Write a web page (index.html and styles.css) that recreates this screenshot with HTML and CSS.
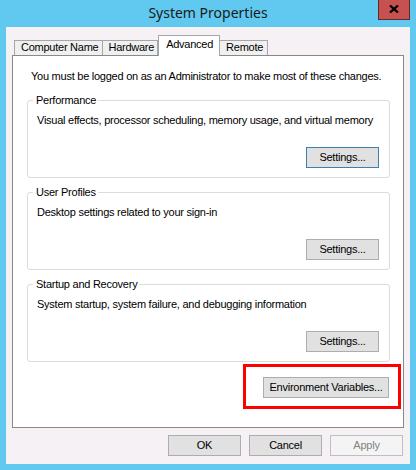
FILE: index.html
```html
<!DOCTYPE html>
<html>
<head>
<meta charset="utf-8">
<link rel="stylesheet" href="styles.css">
</head>
<body>
<div class="frame">
  <div class="titlebar">
    <span></span>
    <span class="title">System Properties</span>
    <span class="close-wrap">
      <span class="close"><svg width="10" height="8" viewBox="0 0 10 8"><path d="M1 0.5 L9 7.5 M9 0.5 L1 7.5" stroke="#000" stroke-width="2.3" fill="none"/></svg></span>
    </span>
  </div>
  <div class="window">
    <div class="tabs">
      <div class="tab">Computer Name</div>
      <div class="tab hw">Hardware</div>
      <div class="tab active">Advanced</div>
      <div class="tab">Remote</div>
    </div>
    <div class="panel">
      <p class="intro">You must be logged on as an Administrator to make most of these changes.</p>
      <fieldset class="group">
        <legend>Performance</legend>
        <p class="desc">Visual effects, processor scheduling, memory usage, and virtual memory</p>
        <div class="row"><button class="btn focus">Settings...</button></div>
      </fieldset>
      <fieldset class="group">
        <legend>User Profiles</legend>
        <p class="desc">Desktop settings related to your sign-in</p>
        <div class="row"><button class="btn">Settings...</button></div>
      </fieldset>
      <fieldset class="group last">
        <legend>Startup and Recovery</legend>
        <p class="desc">System startup, system failure, and debugging information</p>
        <div class="row"><button class="btn">Settings...</button></div>
      </fieldset>
      <div class="env-row">
        <div class="highlight"><button class="btn env">Environment Variables...</button></div>
      </div>
    </div>
    <div class="actions">
      <button class="btn act">OK</button>
      <button class="btn act">Cancel</button>
      <button class="btn act disabled">Apply</button>
    </div>
  </div>
</div>
</body>
</html>
```
FILE: styles.css
```css
* { box-sizing: border-box; }
html, body { margin: 0; padding: 0; }
body {
  background: #61c9ef;
  font-family: "Liberation Sans", Arial, sans-serif;
  font-size: 11px;
  letter-spacing: -0.25px;
  color: #000;
}
.frame {
  width: 416px;
  height: 470px;
  display: flex;
  flex-direction: column;
}
.titlebar {
  height: 27px;
  display: grid;
  grid-template-columns: 1fr auto 1fr;
  align-items: start;
}
.title {
  font-family: "Noto Sans", "Open Sans", sans-serif;
  font-size: 14px;
  letter-spacing: 0;
  line-height: 26px;
  color: #1a1a1a;
}
.close-wrap { display: flex; justify-content: flex-end; padding-right: 6px; }
.close {
  width: 32px;
  height: 20px;
  background: #c75050;
  border: 1px solid #5e2a2a;
  border-top: none;
  display: flex;
  align-items: center;
  justify-content: center;
  padding-bottom: 2px;
}
.window {
  margin: 0 6px;
  height: 437px;
  background: #f5f1f5;
  display: flex;
  flex-direction: column;
}
.tabs {
  display: flex;
  align-items: flex-end;
  padding: 8px 0 0 8px;
  height: 28px;
  position: relative;
  z-index: 1;
}
.tab {
  height: 15px;
  border: 1px solid #a6a6a6;
  border-bottom: none;
  padding: 0 4px 0 6px;
  line-height: 13px;
  background: #f0f0f0;
  white-space: nowrap;
}
.tab.hw { padding: 0 3px 0 5px; }
.tab + .tab { border-left: none; }
.tab.active {
  height: 21px;
  background: #fff;
  border-left: 1px solid #a6a6a6;
  padding: 0 6px 0 7px;
  line-height: 16px;
  margin-bottom: -1px;
  position: relative;
}
.tab.active + .tab { border-left: none; }
.panel {
  margin: 0 6px;
  height: 373px;
  background: #fff;
  border: 1px solid #898989;
  padding: 14px 13px 0 14px;
}
.intro {
  margin: 0 0 11px 4px;
  line-height: 13px;
  height: 13px;
  white-space: nowrap;
}
.group {
  margin: 0 0 8px 0;
  border: 1px solid #dcdcdc;
  border-radius: 3px;
  padding: 0 10px 9px 9px;
  height: 84px;
}
.group.last { margin-top: 1px; }
.group legend {
  margin-left: -4px;
  padding: 0 2px 0 3px;
  line-height: 13px;
}
.desc {
  margin: 7px 0 0 0;
  line-height: 13px;
  height: 13px;
  white-space: nowrap;
}
.row {
  display: flex;
  justify-content: flex-end;
  margin-top: 20px;
}
.btn {
  font-family: inherit;
  font-size: 11px;
  letter-spacing: -0.25px;
  color: #000;
  background: #e1e1e1;
  border: 1px solid #adadad;
  height: 21px;
  width: 73px;
  padding: 0;
  margin: 0;
  line-height: 19px;
}
.btn.focus { border-color: #3c7fb1; }
.env-row {
  display: flex;
  justify-content: flex-end;
  margin: -6px -11px 0 0;
}
.highlight {
  display: flex;
  width: 158px;
  height: 45px;
  border: 3px solid #ff0000;
  padding: 10px 9px 0 17px;
}
.btn.env { width: 126px; flex: none; }
.actions {
  display: flex;
  justify-content: flex-end;
  gap: 8px;
  padding: 7px 7px 0 0;
}
.btn.disabled {
  background: #f4f4f4;
  border-color: #bfbfbf;
  color: #838383;
}
```
